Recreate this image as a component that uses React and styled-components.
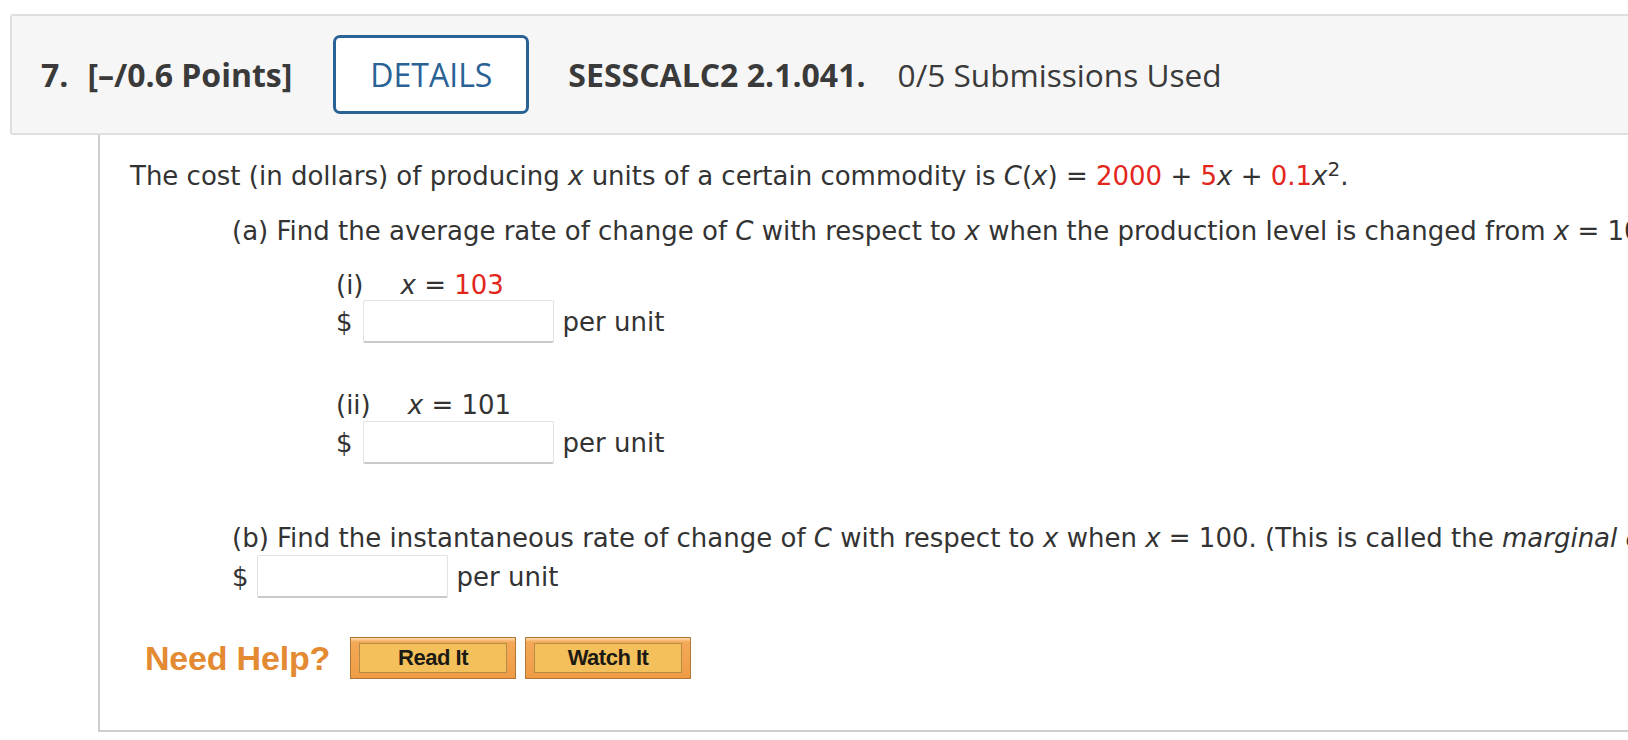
import React from "react";
import styled, { createGlobalStyle } from "styled-components";

const GlobalStyle = createGlobalStyle`
  html, body {
    margin: 0;
    padding: 0;
    background: #ffffff;
    overflow: hidden;
  }
`;

const Question = () => {
  return (
    <Page>
      <GlobalStyle />
      <Header>
        <Number>7.</Number>
        <Points>[–/0.6 Points]</Points>
        <DetailsButton>DETAILS</DetailsButton>
        <Code>SESSCALC2 2.1.041.</Code>
        <Submissions>0/5 Submissions Used</Submissions>
      </Header>

      <Body>
        <Line>
          The cost (in dollars) of producing <Var>x</Var> units of a certain
          commodity is <Var>C</Var>(<Var>x</Var>) = <Red>2000</Red> +{" "}
          <Red>5</Red>
          <Var>x</Var> + <Red>0.1</Red>
          <Var>x</Var>
          <Sup>2</Sup>.
        </Line>

        <Part $top={25}>
          (a) Find the average rate of change of <Var>C</Var> with respect to{" "}
          <Var>x</Var> when the production level is changed from <Var>x</Var> =
          100 to the following.
        </Part>

        <SubLabel $top={24}>
          <Roman>(i)</Roman>
          <Var>x</Var>&nbsp;=&nbsp;<Red>103</Red>
        </SubLabel>
        <AnswerRow $indent={206} $top={0}>
          <Dollar>$</Dollar>
          <Answer $gap={10} />
          <Unit>per unit</Unit>
        </AnswerRow>

        <SubLabel $top={47}>
          <Roman>(ii)</Roman>
          <Var>x</Var>&nbsp;=&nbsp;101
        </SubLabel>
        <AnswerRow $indent={206} $top={1}>
          <Dollar>$</Dollar>
          <Answer $gap={10} />
          <Unit>per unit</Unit>
        </AnswerRow>

        <Part $top={59}>
          (b) Find the instantaneous rate of change of <Var>C</Var> with respect
          to <Var>x</Var> when <Var>x</Var> = 100. (This is called the{" "}
          <Var>marginal cost</Var>.)
        </Part>
        <AnswerRow $indent={102} $top={2}>
          <Dollar>$</Dollar>
          <Answer $gap={8} />
          <Unit>per unit</Unit>
        </AnswerRow>

        <HelpRow>
          <NeedHelp>Need Help?</NeedHelp>
          <HelpButton>
            <HelpFace>Read It</HelpFace>
          </HelpButton>
          <HelpButton>
            <HelpFace>Watch It</HelpFace>
          </HelpButton>
        </HelpRow>
      </Body>
    </Page>
  );
};

const Page = styled.div`
  width: 100%;
  padding-top: 14px;
  overflow: hidden;
`;

const Header = styled.div`
  display: flex;
  align-items: center;
  height: 117px;
  margin-left: 10px;
  padding-left: 29px;
  background: #f6f6f6;
  border: 2px solid #dfdfdf;
  border-right: none;
  border-radius: 3px 0 0 3px;
  font-family: "Open Sans", sans-serif;
  font-size: 32px;
  color: #3a3a3a;
  white-space: nowrap;
`;

const Number = styled.span`
  font-weight: 700;
  margin-right: 19px;
`;

const Points = styled.span`
  font-weight: 700;
  margin-right: 41px;
`;

const DetailsButton = styled.button`
  box-sizing: border-box;
  width: 196px;
  height: 79px;
  margin-right: 39px;
  padding: 0;
  background: #ffffff;
  border: 3px solid #2b6296;
  border-radius: 7px;
  font-family: "Open Sans", sans-serif;
  font-size: 32px;
  font-weight: 500;
  color: #2b6296;
  cursor: pointer;
`;

const Code = styled.span`
  font-weight: 700;
  margin-right: 32px;
`;

const Submissions = styled.span`
  font-weight: 400;
  font-size: 31.6px;
`;

const Body = styled.div`
  margin-left: 98px;
  padding: 26px 0 51px 30px;
  border-left: 2px solid #cdcdcd;
  border-bottom: 2px solid #cdcdcd;
  font-family: "DejaVu Sans", Verdana, sans-serif;
  font-size: 26px;
  line-height: 30px;
  color: #333333;
  white-space: nowrap;
`;

const Line = styled.div`
  height: 30px;
`;

const Part = styled.div`
  height: 30px;
  margin-top: ${(p) => p.$top}px;
  margin-left: 102px;
`;

const SubLabel = styled.div`
  display: flex;
  height: 30px;
  margin-top: ${(p) => p.$top}px;
  margin-left: 206px;
`;

const Roman = styled.span`
  margin-right: 37px;
`;

const Var = styled.i`
  font-style: italic;
`;

const Red = styled.span`
  color: #e2261c;
`;

const Sup = styled.sup`
  font-size: 20px;
  line-height: 0;
  vertical-align: 9px;
`;

const AnswerRow = styled.div`
  display: flex;
  align-items: center;
  height: 43px;
  margin-top: ${(p) => p.$top}px;
  margin-left: ${(p) => p.$indent}px;
`;

const Dollar = styled.span``;

const Answer = styled.input`
  box-sizing: border-box;
  width: 191px;
  height: 43px;
  margin: 0 9px 0 ${(p) => p.$gap}px;
  background: #ffffff;
  border: 1px solid #e2e2e2;
  border-bottom: 2px solid #c9c9c9;
  border-radius: 2px;
  outline: none;
`;

const Unit = styled.span``;

const HelpRow = styled.div`
  display: flex;
  align-items: center;
  height: 42px;
  margin-top: 39px;
  margin-left: 15px;
`;

const NeedHelp = styled.span`
  margin-right: 20px;
  font-family: "Liberation Sans", Arial, sans-serif;
  font-size: 34px;
  font-weight: 700;
  color: #e38a32;
  letter-spacing: -0.2px;
`;

const HelpButton = styled.button`
  box-sizing: border-box;
  width: 166px;
  height: 42px;
  margin-right: 9px;
  padding: 5px 8px 7px 8px;
  border: 1px solid #b07637;
  background: linear-gradient(#fddcae 0, #f4a957 4px, #ef9c45 100%);
  cursor: pointer;
`;

const HelpFace = styled.span`
  display: flex;
  align-items: center;
  justify-content: center;
  height: 100%;
  border: 1px solid #b68b47;
  background: #f4c05b;
  font-family: "Liberation Sans", Arial, sans-serif;
  font-size: 22px;
  font-weight: 700;
  letter-spacing: -0.5px;
  color: #1c1a14;
`;

export default Question;
